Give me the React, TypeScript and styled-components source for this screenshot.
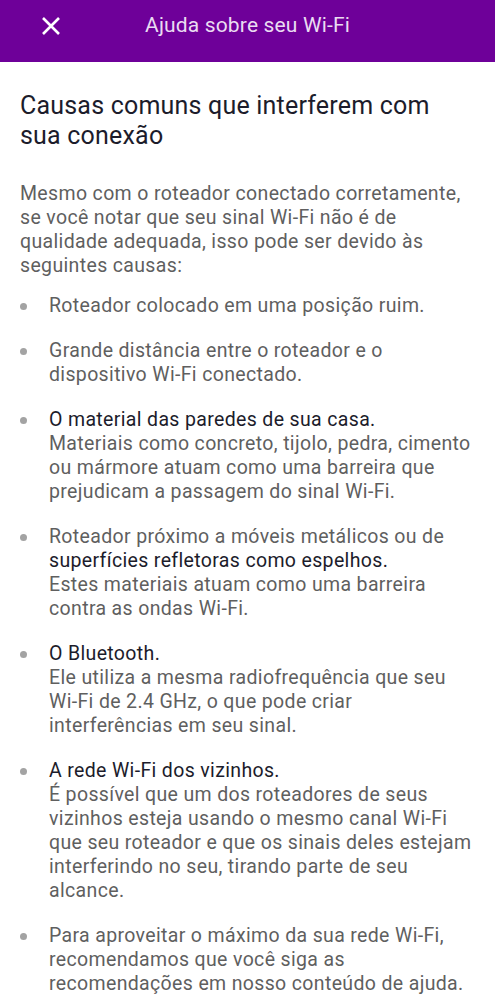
import React from "react";
import styled, { createGlobalStyle } from "styled-components";

const Global = createGlobalStyle`
  html, body { margin: 0; padding: 0; background: #ffffff; }
  body { font-family: Roboto, "Noto Sans", Arial, sans-serif; -webkit-font-smoothing: antialiased; }
`;

const Page = styled.div`
  width: 495px;
  min-height: 1000px;
  background: #ffffff;
`;

const Header = styled.header`
  height: 62px;
  background: #6e0099;
  display: flex;
  align-items: flex-start;
  position: relative;
`;

const CloseButton = styled.button`
  border: 0;
  background: transparent;
  padding: 0;
  margin: 15px 0 0 40px;
  width: 21px;
  height: 21px;
  display: flex;
  align-items: center;
  justify-content: center;
  cursor: pointer;
`;

const HeaderTitle = styled.h1`
  position: absolute;
  left: 0;
  right: 0;
  top: 0;
  line-height: 50px;
  margin: 0;
  text-align: center;
  font-size: 21px;
  letter-spacing: 0.15px;
  font-weight: 400;
  color: #eadcf2;
  pointer-events: none;
`;

const Content = styled.main`
  padding: 29px 20px 0 20px;
`;

const Title = styled.h2`
  margin: 0;
  font-size: 25px;
  line-height: 30px;
  letter-spacing: 0.2px;
  font-weight: 400;
  color: #1c1c2b;
`;

const Intro = styled.p`
  margin: 31px 0 0 0;
  font-size: 19.5px;
  line-height: 24px;
  letter-spacing: 0.35px;
  color: #5f5f5f;
`;

const List = styled.ul`
  list-style: none;
  margin: 16px 0 0 0;
  padding: 0;
  display: flex;
  flex-direction: column;
  gap: 21px;
`;

const Item = styled.li`
  display: flex;
  align-items: flex-start;
`;

const Dot = styled.span`
  flex: none;
  width: 7px;
  height: 7px;
  border-radius: 50%;
  background: #a3a3a3;
  margin: 9px 22px 0 0;
`;

const ItemText = styled.div`
  font-size: 19.5px;
  line-height: 24px;
  letter-spacing: 0.35px;
  color: #5f5f5f;
`;

const Strong = styled.span`
  color: #1c1c2b;
`;

const items: { lead?: string; rest?: string; pre?: string }[] = [
  { rest: "Roteador colocado em uma posição ruim." },
  { rest: "Grande distância entre o roteador e o dispositivo Wi-Fi conectado." },
  {
    lead: "O material das paredes de sua casa.",
    rest: "Materiais como concreto, tijolo, pedra, cimento ou mármore atuam como uma barreira que prejudicam a passagem do sinal Wi-Fi.",
  },
  {
    pre: "Roteador próximo a móveis metálicos ou de ",
    lead: "superfícies refletoras como espelhos.",
    rest: "Estes materiais atuam como uma barreira contra as ondas Wi-Fi.",
  },
  {
    lead: "O Bluetooth.",
    rest: "Ele utiliza a mesma radiofrequência que seu Wi-Fi de 2.4 GHz, o que pode criar interferências em seu sinal.",
  },
  {
    lead: "A rede Wi-Fi dos vizinhos.",
    rest: "É possível que um dos roteadores de seus vizinhos esteja usando o mesmo canal Wi-Fi que seu roteador e que os sinais deles estejam interferindo no seu, tirando parte de seu alcance.",
  },
  {
    rest: "Para aproveitar o máximo da sua rede Wi-Fi, recomendamos que você siga as recomendações em nosso conteúdo de ajuda.",
  },
];

export default function App() {
  return (
    <Page>
      <Global />
      <Header>
        <CloseButton aria-label="Fechar">
          <svg width="20" height="20" viewBox="0 0 20 20">
            <path d="M2 2 L18 18 M18 2 L2 18" stroke="#ffffff" strokeWidth="2.6" strokeLinecap="butt" />
          </svg>
        </CloseButton>
        <HeaderTitle>Ajuda sobre seu Wi-Fi</HeaderTitle>
      </Header>
      <Content>
        <Title>Causas comuns que interferem com sua conexão</Title>
        <Intro>
          Mesmo com o roteador conectado corretamente, se você notar que seu sinal Wi-Fi não é de
          qualidade adequada, isso pode ser devido às seguintes causas:
        </Intro>
        <List>
          {items.map((it, i) => (
            <Item key={i}>
              <Dot />
              <ItemText>
                {it.pre}
                {it.lead && <Strong>{it.lead}</Strong>}
                {it.lead && it.rest && <br />}
                {it.rest}
              </ItemText>
            </Item>
          ))}
        </List>
      </Content>
    </Page>
  );
}
